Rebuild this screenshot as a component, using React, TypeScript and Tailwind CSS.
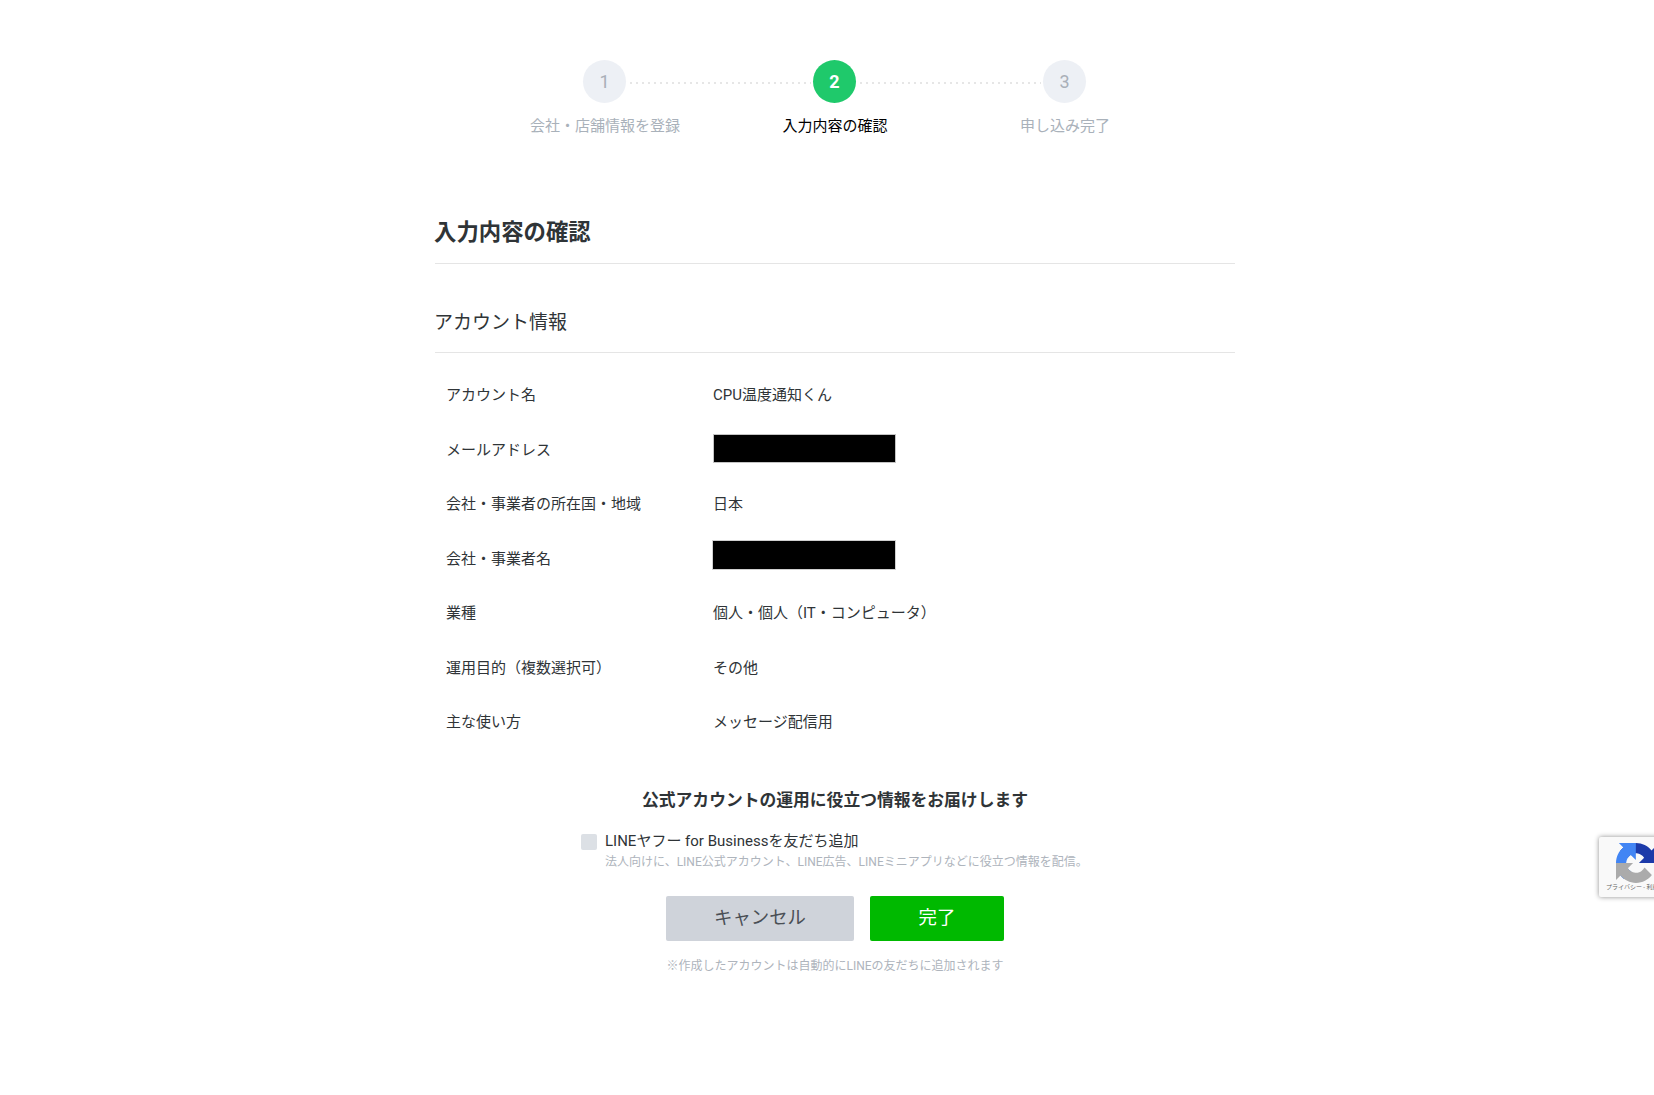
import React from "react";

type Row = { label: string; value?: string; box?: string };

const rows: Row[] = [
  { label: "アカウント名", value: "CPU温度通知くん" },
  { label: "メールアドレス", box: "mb-[2px] h-[29px] w-[183px] border border-[#c4c4c4] bg-black" },
  { label: "会社・事業者の所在国・地域", value: "日本" },
  { label: "会社・事業者名", box: "-ml-[1px] mb-[7px] h-[30px] w-[184px] border border-[#d0d0d0] bg-black" },
  { label: "業種", value: "個人・個人（IT・コンピュータ）" },
  { label: "運用目的（複数選択可）", value: "その他" },
  { label: "主な使い方", value: "メッセージ配信用" },
];

function Circle({ n, active }: { n: number; active?: boolean }) {
  return (
    <div
      className={
        active
          ? "flex h-[43px] w-[43px] shrink-0 items-center justify-center rounded-full bg-[#1fc96b] text-[18px] font-bold text-white"
          : "flex h-[43px] w-[43px] shrink-0 items-center justify-center rounded-full bg-[#edf0f5] text-[18px] text-[#a9afb8]"
      }
    >
      {n}
    </div>
  );
}

function Dots() {
  return (
    <div className="ml-[4px] mr-[2px] mt-[2px] h-[2px] flex-1 bg-[repeating-linear-gradient(90deg,#e6e6e6_0,#e6e6e6_2px,transparent_2px,transparent_6px)]" />
  );
}

export default function App() {
  return (
    <div
      className="relative h-[1095px] overflow-hidden bg-white text-[15px] text-[#2f3437]"
      style={{ fontFamily: 'Roboto, "Noto Sans CJK JP", sans-serif' }}
    >
      <div className="ml-[435px] w-[800px]">
        <div className="flex flex-col items-center pt-[60px]">
          <div className="mr-[1px] flex w-[503px] items-center">
            <Circle n={1} />
            <Dots />
            <Circle n={2} active />
            <Dots />
            <Circle n={3} />
          </div>
          <div className="mt-[12px] grid w-[690px] grid-cols-3 text-center text-[15px] leading-[22px] text-[#a9b1ba]">
            <div>会社・店舗情報を登録</div>
            <div className="text-black">入力内容の確認</div>
            <div>申し込み完了</div>
          </div>
        </div>

        <h1 className="mt-[79px] border-b border-[#e5e5e5] pb-[15px] text-[22.4px] font-bold leading-[32px] text-[#2f3437]">
          <div className="-ml-[1px]">入力内容の確認</div>
        </h1>
        <h2 className="mt-[45px] border-b border-[#e5e5e5] pb-[15px] text-[19px] font-normal leading-[28px]">
          <div className="-ml-[1px]">アカウント情報</div>
        </h2>

        <div className="mt-[15px] flex flex-col px-[11px]">
          {rows.map((r, i) => (
            <div key={i} className="flex h-[54.5px] items-center">
              <div className="w-[267px] shrink-0">{r.label}</div>
              {r.value ? <div>{r.value}</div> : <div className={r.box} />}
            </div>
          ))}
        </div>

        <div className="mt-[38px] text-center text-[16.8px] font-bold leading-[24px]">
          公式アカウントの運用に役立つ情報をお届けします
        </div>

        <div className="ml-[146px] mt-[17px] flex gap-[8px]">
          <div className="mt-[5px] h-[16px] w-[16px] rounded-[2px] bg-[#dce0e5]" />
          <div>
            <div className="leading-[24px]">LINEヤフー for Businessを友だち追加</div>
            <div className="text-[12px] leading-[18px] text-[#aeb4bc]">
              法人向けに、LINE公式アカウント、LINE広告、LINEミニアプリなどに役立つ情報を配信。
            </div>
          </div>
        </div>

        <div className="mt-[25px] flex justify-center gap-[16px]">
          <button className="h-[45px] w-[188px] rounded-[2px] bg-[#cfd3da] text-[18.4px] text-[#4a4f55]">
            キャンセル
          </button>
          <button className="h-[45px] w-[134px] rounded-[2px] bg-[#00b900] text-[18.4px] text-white">
            完了
          </button>
        </div>

        <div className="mt-[15px] text-center text-[12px] leading-[20px] text-[#aeb4bc]">
          ※作成したアカウントは自動的にLINEの友だちに追加されます
        </div>
      </div>

      <div className="absolute left-[1599px] top-[837px] h-[60px] w-[70px] overflow-hidden rounded-l-[2px] bg-[#f9f9f9] shadow-[0_0_5px_rgba(0,0,0,0.45)]">
        <svg viewBox="0 0 64 64" className="absolute left-[17px] top-[6px] h-[40px] w-[40px]">
          <path d="M64 31.955l-.033-1.37V4.687l-7.16 7.16C50.948 4.674 42.033.093 32.05.093c-10.4 0-19.622 4.96-25.458 12.64l11.736 11.86c1.15-2.127 2.784-3.955 4.76-5.338 2.05-1.6 4.952-2.908 8.962-2.908.484 0 .858.057 1.133.163 4.97.392 9.277 3.135 11.815 7.116l-8.306 8.31c10.522-.04 22.41-.066 27.307.003" fill="#1c3aa9" />
          <path d="M31.862.001l-1.37.033H4.594l7.16 7.16C4.58 13.053 0 21.968 0 31.95c0 10.4 4.96 19.622 12.64 25.458L24.5 45.672c-2.127-1.15-3.955-2.784-5.338-4.76-1.6-2.05-2.908-4.952-2.908-8.962 0-.484.057-.858.163-1.133.392-4.97 3.135-9.277 7.116-11.815l8.31 8.306C31.803 16.786 31.777 4.898 31.846 0" fill="#4285f4" />
          <path d="M.002 31.954l.033 1.37v25.9l7.16-7.16c5.86 7.173 14.774 11.754 24.757 11.754 10.4 0 19.622-4.96 25.458-12.64l-11.736-11.86c-1.15 2.127-2.784 3.955-4.76 5.338-2.05 1.6-4.952 2.908-8.962 2.908-.484 0-.858-.057-1.133-.163-4.97-.392-9.277-3.135-11.815-7.116l8.306-8.31c-10.522.04-22.41.066-27.307-.003" fill="#ababab" />
        </svg>
        <div className="absolute left-[7px] top-[46px] whitespace-nowrap text-[6px] leading-[8px] text-[#666]">
          プライバシー - 利用規約
        </div>
      </div>
    </div>
  );
}
